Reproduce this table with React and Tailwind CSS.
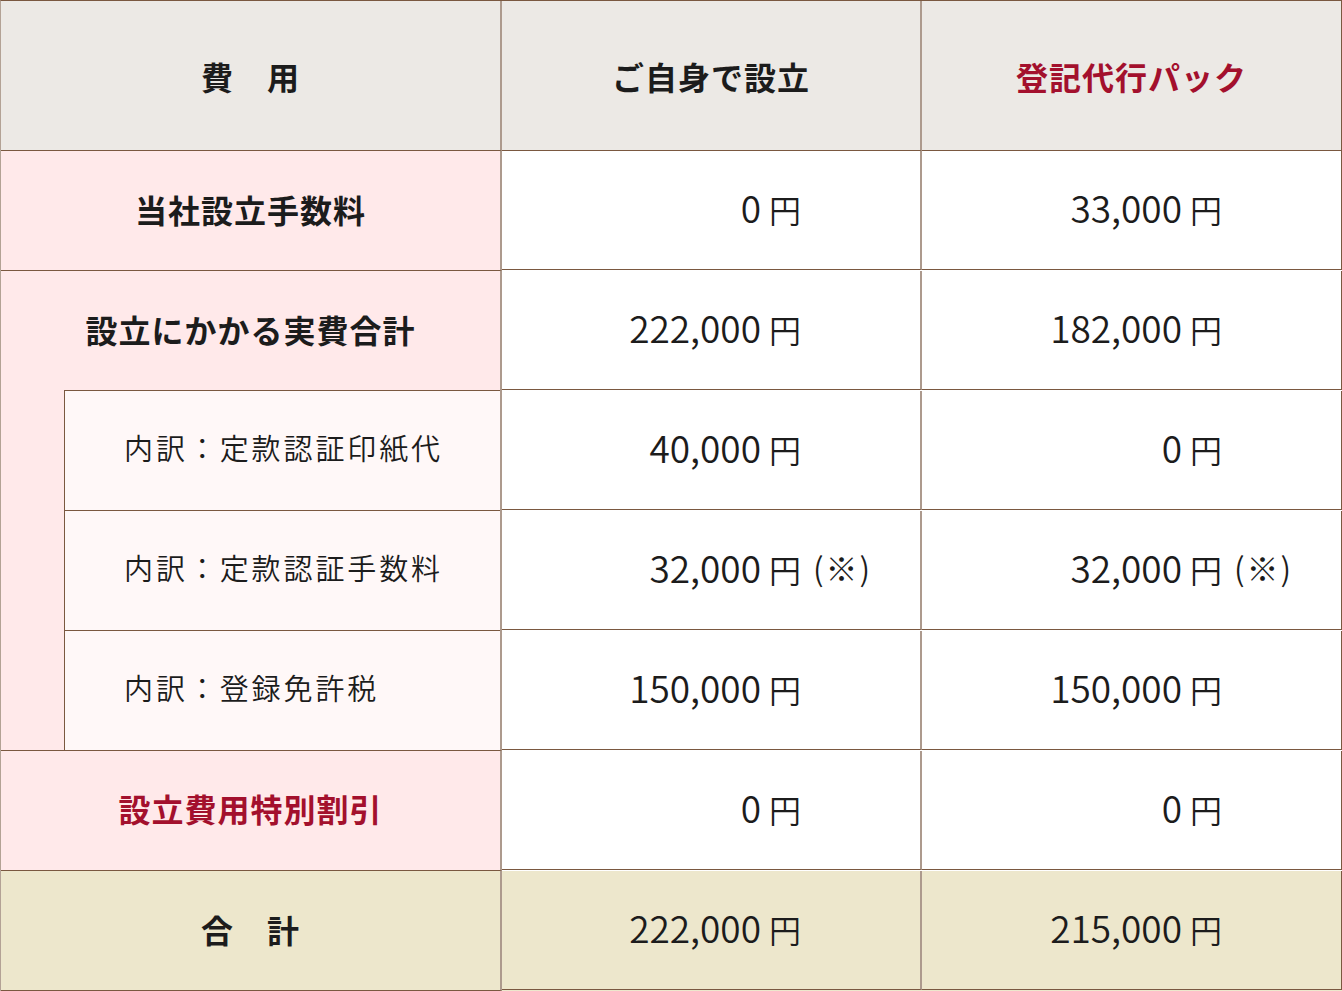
const subRows = [
  { label: '内訳：定款認証印紙代', self: '40,000', pack: '0' },
  { label: '内訳：定款認証手数料', self: '32,000', pack: '32,000', note: true },
  { label: '内訳：登録免許税', self: '150,000', pack: '150,000' },
];

function Amount({ value, note, last }) {
  return (
    <div
      className={`grid grid-cols-[1fr_119px] items-center h-[119px] pb-[6px] border-b border-b-[#7a5840] ${
        last ? 'border-r border-r-[#7a5840]' : 'border-r-2 border-r-[#ad9a8d]'
      }`}
    >
      <span className="text-right text-[37px] font-[350] text-[#1c1c1c] leading-none">
        {value}
        <span className="ml-[8px] text-[32px]">円</span>
      </span>
      <span className="pl-[12px] text-[32px] font-[350] text-[#1c1c1c] leading-none tracking-[0.06em]">
        {note ? '(※)' : ''}
      </span>
    </div>
  );
}

const head = 'flex items-center justify-center text-[32px] font-bold tracking-[1px]';

export default function App() {
  return (
    <div className="w-[1342px] bg-white font-['Noto_Sans_CJK_JP','Noto_Sans',sans-serif]">
      <div className="border-t border-t-[#7a5840] border-l border-l-[#b3a295] grid grid-cols-[501px_420px_420px]">
        {/* header */}
        <div className={`h-[150px] bg-[#ece9e5] border-b border-b-[#7a5840] border-r-2 border-r-[#ad9a8d] text-[#1c1c1c] ${head}`}>
          費　用
        </div>
        <div className={`h-[150px] bg-[#ece9e5] border-b border-b-[#7a5840] border-r-2 border-r-[#ad9a8d] text-[#1c1c1c] ${head}`}>
          ご自身で設立
        </div>
        <div className={`h-[150px] bg-[#ece9e5] border-b border-b-[#7a5840] border-r border-r-[#7a5840] text-[#a3102d] ${head}`}>
          登記代行パック
        </div>

        {/* company fee */}
        <div className={`h-[120px] pb-[4px] bg-[#ffe9ea] border-b border-b-[#7a5840] border-r-2 border-r-[#ad9a8d] text-[#1c1c1c] ${head}`}>
          当社設立手数料
        </div>
        <div className="bg-white"><Amount value="0" /></div>
        <div className="bg-white"><Amount value="33,000" last /></div>

        {/* expenses group */}
        <div className="row-span-4 bg-[#ffe9ea] border-b border-b-[#7a5840] border-r-2 border-r-[#ad9a8d] flex flex-col">
          <div className={`h-[119px] pb-[4px] text-[#1c1c1c] ${head}`}>
            設立にかかる実費合計
          </div>
          <div className="pl-[63px] flex flex-col">
            {subRows.map((s) => (
              <div
                key={s.label}
                className="h-[120px] pb-[6px] bg-[#fff8f8] border-t border-t-[#7a5840] border-l border-l-[#7a5840] flex items-center pl-[59px] text-[29px] font-[350] tracking-[0.1em] text-[#1c1c1c]"
              >
                {s.label}
              </div>
            ))}
          </div>
        </div>
        <div className="bg-white"><Amount value="222,000" /></div>
        <div className="bg-white"><Amount value="182,000" last /></div>
        {subRows.map((s) => (
          <div key={s.label} className="contents">
            <div className="bg-white"><Amount value={s.self} note={s.note} /></div>
            <div className="bg-white"><Amount value={s.pack} note={s.note} last /></div>
          </div>
        ))}

        {/* discount */}
        <div className={`h-[120px] pb-[6px] bg-[#ffe9ea] border-b border-b-[#7a5840] border-r-2 border-r-[#ad9a8d] text-[#a3102d] ${head}`}>
          設立費用特別割引
        </div>
        <div className="bg-white"><Amount value="0" /></div>
        <div className="bg-white"><Amount value="0" last /></div>

        {/* total */}
        <div className={`h-[120px] pb-[4px] bg-[#ede7cc] border-b border-b-[#7a5840] border-r-2 border-r-[#ad9a8d] text-[#1c1c1c] ${head}`}>
          合　計
        </div>
        <div className="bg-[#ede7cc]"><Amount value="222,000" /></div>
        <div className="bg-[#ede7cc]"><Amount value="215,000" last /></div>
      </div>
    </div>
  );
}
